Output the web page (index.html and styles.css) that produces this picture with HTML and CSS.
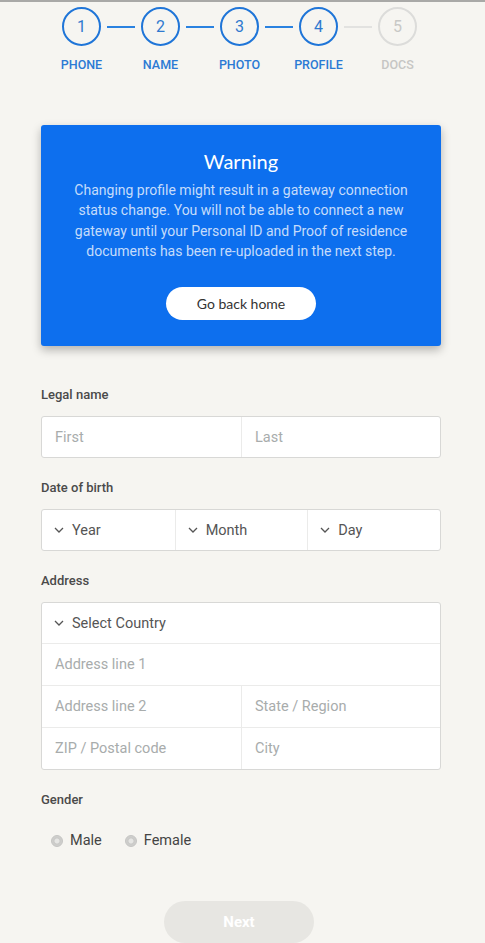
FILE: index.html
```html
<!DOCTYPE html>
<html>
  <head>
    <title>Profile</title>
    <link rel="stylesheet" href="styles.css">
  </head>

  <body>
    <div id="steps">
      <div class="dots">
        <span class="dot done">1</span>
        <span class="bar done"></span>
        <span class="dot done">2</span>
        <span class="bar done"></span>
        <span class="dot done">3</span>
        <span class="bar done"></span>
        <span class="dot done">4</span>
        <span class="bar"></span>
        <span class="dot">5</span>
      </div>
      <div class="names">
        <span class="name done">PHONE</span>
        <span class="name done">NAME</span>
        <span class="name done">PHOTO</span>
        <span class="name done">PROFILE</span>
        <span class="name">DOCS</span>
      </div>
    </div>

    <div id="page">
      <div class="warning">
        <h2 class="warning-title">Warning</h2>
        <p class="warning-text">
          Changing profile might result in a gateway connection status change.
          You will not be able to connect a new gateway until your Personal ID
          and Proof of residence documents has been re-uploaded in the next step.
        </p>
        <a class="home-btn" href="#">Go back home</a>
      </div>

      <div class="field">
        <div class="label">Legal name</div>
        <div class="box">
          <div class="row">
            <div class="cell hint">First</div>
            <div class="cell hint">Last</div>
          </div>
        </div>
      </div>

      <div class="field">
        <div class="label">Date of birth</div>
        <div class="box">
          <div class="row three">
            <div class="cell pick">
              <svg class="chev" width="10" height="6" viewBox="0 0 10 6"><polyline points="1,1 5,5 9,1" /></svg>
              Year
            </div>
            <div class="cell pick">
              <svg class="chev" width="10" height="6" viewBox="0 0 10 6"><polyline points="1,1 5,5 9,1" /></svg>
              Month
            </div>
            <div class="cell pick">
              <svg class="chev" width="10" height="6" viewBox="0 0 10 6"><polyline points="1,1 5,5 9,1" /></svg>
              Day
            </div>
          </div>
        </div>
      </div>

      <div class="field">
        <div class="label">Address</div>
        <div class="box">
          <div class="row one">
            <div class="cell pick">
              <svg class="chev" width="10" height="6" viewBox="0 0 10 6"><polyline points="1,1 5,5 9,1" /></svg>
              Select Country
            </div>
          </div>
          <div class="row one">
            <div class="cell hint">Address line 1</div>
          </div>
          <div class="row">
            <div class="cell hint">Address line 2</div>
            <div class="cell hint">State / Region</div>
          </div>
          <div class="row">
            <div class="cell hint">ZIP / Postal code</div>
            <div class="cell hint">City</div>
          </div>
        </div>
      </div>

      <div class="field">
        <div class="label">Gender</div>
        <div class="radios">
          <label class="radio"><span class="knob"></span>Male</label>
          <label class="radio"><span class="knob"></span>Female</label>
        </div>
      </div>

      <div class="actions">
        <button class="next">Next</button>
      </div>
    </div>
  </body>
</html>
```

FILE: styles.css
```css
body {
  margin: 0px;
  background-color: #f6f5f1;
  border-top: 2px solid #a9a9a7;
  font-family: Roboto, "Liberation Sans", sans-serif;
  overflow: hidden;
}

#steps {
  padding-top: 5px;
}

.dots {
  display: flex;
  align-items: center;
  margin-left: 62px;
}

.dot {
  box-sizing: border-box;
  width: 39px;
  height: 39px;
  border-radius: 50%;
  border: 2px solid #dcdcda;
  color: #c8c8c6;
  font-size: 16px;
  display: flex;
  align-items: center;
  justify-content: center;
}

.dot.done {
  border-color: #1f75d8;
  color: #2f79cf;
}

.bar {
  width: 28px;
  height: 2px;
  margin: 0px 6px;
  background-color: #e2e2e0;
}

.bar.done {
  background-color: #2a82e0;
}

.names {
  display: grid;
  grid-template-columns: repeat(5, 79px);
  margin-left: 42px;
  margin-top: 12px;
}

.name {
  text-align: center;
  font-size: 12.5px;
  font-weight: 500;
  color: #c6c6c4;
  line-height: 14px;
}

.name.done {
  color: #2b7ad4;
}

#page {
  padding: 53px 44px 0px 41px;
}

.warning {
  background-color: #0d6fee;
  border-radius: 3px;
  box-shadow: 0px 4px 10px rgba(0, 0, 0, 0.28);
  padding: 24px 28px 26px;
  text-align: center;
}

.warning-title {
  margin: 0px;
  font-family: Lato, sans-serif;
  font-weight: 400;
  font-size: 20px;
  line-height: 24px;
  color: white;
}

.warning-text {
  margin: 7px 0px 26px;
  font-size: 14px;
  line-height: 20.3px;
  color: #c5dcfb;
}

.home-btn {
  display: inline-block;
  width: 150px;
  height: 33px;
  line-height: 33px;
  border-radius: 17px;
  background-color: white;
  color: #333;
  font-family: Lato, sans-serif;
  font-size: 14px;
  text-decoration: none;
}

.field {
  margin-top: 22px;
}

.warning + .field {
  margin-top: 41px;
}

.label {
  font-size: 13px;
  font-weight: 500;
  line-height: 16px;
  color: #4a4a4a;
  margin-bottom: 13px;
}

.box {
  background-color: white;
  border: 1px solid #d8d8d6;
  border-radius: 3px;
}

.row {
  display: grid;
  grid-template-columns: 1fr 1fr;
  height: 41px;
  border-top: 1px solid #ebebea;
}

.row:first-child {
  border-top: none;
  height: 40px;
}

.row.three {
  grid-template-columns: 1fr 1fr 1fr;
}

.row.one {
  grid-template-columns: 1fr;
}

.cell {
  display: flex;
  align-items: center;
  padding-left: 13px;
  font-size: 14.5px;
  border-left: 1px solid #ebebea;
}

.cell:first-child {
  border-left: none;
}

.hint {
  color: #a8acac;
}

.pick {
  color: #555;
  gap: 8px;
  padding-left: 12px;
}

.chev {
  fill: none;
  stroke: #555;
  stroke-width: 1.3;
}

.radios {
  display: flex;
  gap: 23px;
  padding: 11px 0px 0px 10px;
}

.radio {
  display: flex;
  align-items: center;
  gap: 7px;
  font-size: 14.5px;
  color: #444;
}

.knob {
  box-sizing: border-box;
  width: 12px;
  height: 12px;
  border-radius: 50%;
  border: 1px solid #c4c4c2;
  background: radial-gradient(circle, #e6e6e4 0px, #e6e6e4 2px, #c9c9c7 3px, #d4d4d2 6px);
}

.actions {
  display: flex;
  justify-content: center;
  padding: 52px 4px 0px 0px;
}

.next {
  width: 150px;
  height: 42px;
  border: none;
  border-radius: 21px;
  background-color: #e7e6e2;
  color: white;
  font-family: Roboto, sans-serif;
  font-weight: 700;
  font-size: 15px;
}
```
